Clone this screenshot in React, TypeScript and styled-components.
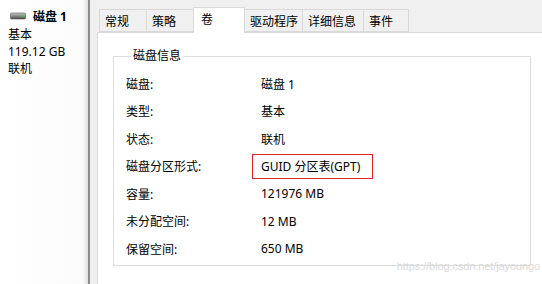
import styled, { createGlobalStyle } from "styled-components";

const GlobalStyle = createGlobalStyle`
    html, body {
        margin: 0;
        padding: 0;
        background: #ffffff;
    }
    body {
        font-family: "Noto Sans", "Noto Sans CJK SC", sans-serif;
        font-size: 12px;
        color: #000000;
    }
`;

const Window = styled.div`
    position: relative;
    display: flex;
    width: 542px;
    height: 284px;
    overflow: hidden;
`;

const DiskPane = styled.div`
    width: 90px;
    flex-shrink: 0;
    padding: 6px 0 0 8px;
    box-sizing: border-box;
    background: linear-gradient(to right, #ffffff 0, #fbfbfb 83px, #d6d6d6 90px);
    border-right: 2px solid #8c8c8c;
    line-height: 17px;
`;

const DiskTitle = styled.div`
    display: flex;
    align-items: center;
    gap: 7px;
    margin-left: 2px;
    font-weight: bold;
    height: 20px;
`;

const DiskLine = styled.div`
    white-space: nowrap;
`;

const Main = styled.div`
    flex: 1;
    background: #f0f0f0;
    padding: 7px 0 0 7px;
    display: flex;
    flex-direction: column;
`;

const TabStrip = styled.div`
    display: flex;
    align-items: flex-end;
    padding-left: 2px;
    height: 25px;
    position: relative;
    z-index: 1;
`;

const Tab = styled.div<{ $active?: boolean; $w: number }>`
    box-sizing: border-box;
    width: ${(p) => p.$w}px;
    height: ${(p) => (p.$active ? "26px" : "23px")};
    margin: ${(p) => (p.$active ? "0 0 -1px -1px" : "0 0 0 -1px")};
    padding: ${(p) => (p.$active ? "0 0 3px 7px" : "0 0 0 5px")};
    display: flex;
    align-items: center;
    background: ${(p) => (p.$active ? "#ffffff" : "#f0f0f0")};
    border: 1px solid #d9d9d9;
    border-bottom: ${(p) => (p.$active ? "none" : "1px solid #d9d9d9")};
    position: relative;
    z-index: ${(p) => (p.$active ? 2 : 1)};
    white-space: nowrap;
    &:first-child {
        margin-left: 0;
    }
`;

const Panel = styled.div`
    flex: 1;
    background: #ffffff;
    border: 1px solid #d9d9d9;
    border-right: none;
    border-bottom: none;
    padding: 15px 9px 0 15px;
`;

const GroupBox = styled.fieldset`
    margin: 0;
    width: 418px;
    height: 218px;
    box-sizing: border-box;
    border: 1px solid #dcdcdc;
    padding: 6px 0 0 12px;
`;

const GroupTitle = styled.legend`
    padding: 0 2px;
    margin-left: 5px;
    line-height: 16px;
`;

const InfoGrid = styled.div`
    display: grid;
    grid-template-columns: 135px 1fr;
    grid-auto-rows: 27.5px;
    align-items: center;
`;

const Label = styled.div`
    white-space: nowrap;
`;

const Value = styled.div`
    white-space: nowrap;
`;

const Highlight = styled.span`
    display: inline-flex;
    align-items: center;
    box-sizing: border-box;
    width: 121px;
    height: 25px;
    margin-left: -9px;
    padding-left: 8px;
    border: 1px solid #e32424;
`;

const Watermark = styled.div`
    position: absolute;
    right: 2px;
    bottom: 12px;
    font-family: "Liberation Sans", Arial, sans-serif;
    font-size: 11px;
    letter-spacing: -0.1px;
    color: #dadada;
`;

function DriveIcon() {
    return (
        <svg width="16" height="8" viewBox="0 0 16 8">
            <defs>
                <linearGradient id="drv" x1="0" y1="0" x2="0" y2="1">
                    <stop offset="0" stopColor="#c8c8c8" />
                    <stop offset="0.5" stopColor="#8a8a8a" />
                    <stop offset="1" stopColor="#4a4a4a" />
                </linearGradient>
            </defs>
            <rect x="0.5" y="1" width="15" height="6" rx="1" fill="url(#drv)" stroke="#555" strokeWidth="0.6" />
            <rect x="11" y="3.3" width="2.5" height="1.6" fill="#35d04a" />
        </svg>
    );
}

const tabs = [
    { name: "常规", w: 48 },
    { name: "策略", w: 48 },
    { name: "卷", w: 52 },
    { name: "驱动程序", w: 59 },
    { name: "详细信息", w: 62 },
    { name: "事件", w: 46 },
];

const rows: { label: string; value: string; mark?: boolean }[] = [
    { label: "磁盘:", value: "磁盘 1" },
    { label: "类型:", value: "基本" },
    { label: "状态:", value: "联机" },
    { label: "磁盘分区形式:", value: "GUID 分区表(GPT)", mark: true },
    { label: "容量:", value: "121976 MB" },
    { label: "未分配空间:", value: "12 MB" },
    { label: "保留空间:", value: "650 MB" },
];

export default function App() {
    return (
        <Window>
            <GlobalStyle />
            <DiskPane>
                <DiskTitle>
                    <DriveIcon />
                    磁盘 1
                </DiskTitle>
                <DiskLine>基本</DiskLine>
                <DiskLine>119.12 GB</DiskLine>
                <DiskLine>联机</DiskLine>
            </DiskPane>
            <Main>
                <TabStrip>
                    {tabs.map((t) => (
                        <Tab key={t.name} $w={t.w} $active={t.name === "卷"}>
                            {t.name}
                        </Tab>
                    ))}
                </TabStrip>
                <Panel>
                    <GroupBox>
                        <GroupTitle>磁盘信息</GroupTitle>
                        <InfoGrid>
                            {rows.map((r) => [
                                <Label key={r.label}>{r.label}</Label>,
                                <Value key={r.label + "v"}>
                                    {r.mark ? <Highlight>{r.value}</Highlight> : r.value}
                                </Value>,
                            ])}
                        </InfoGrid>
                    </GroupBox>
                </Panel>
            </Main>
            <Watermark>https://blog.csdn.net/jayoungo</Watermark>
        </Window>
    );
}
